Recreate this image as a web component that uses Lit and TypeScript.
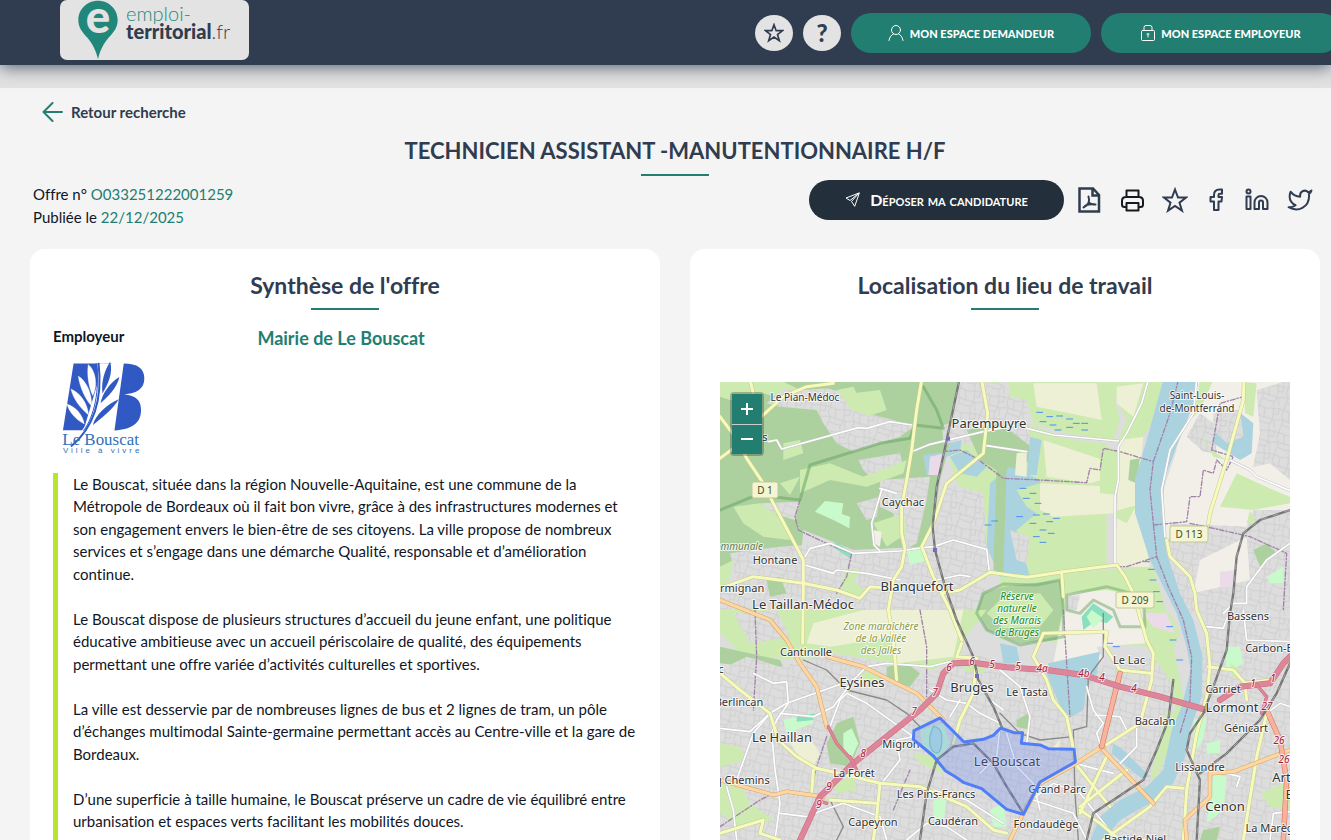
import { LitElement, html, svg, css } from "lit";
import { customElement } from "lit/decorators.js";

type Shape = [string, string];

const FOREST = "#add19e";
const GRASS = "#cdebb0";
const FARM = "#eef0d5";
const WATER = "#aad3df";
const PARK = "#c8facc";
const TOWN = "#dddddd";
const SAND = "#f2efe9";
const MALL = "#ebdbe8";
const PITCH = "#88e0be";

/* Land cover, in thirds of a pixel, painted in order. */
const areas: Shape[] = [
  [FOREST, "0,0 720,0 690,190 660,300 640,440 610,500 400,510 250,450 240,560 60,520 0,600"],
  [GRASS, "0,0 260,0 200,60 130,40 60,70 0,50"],
  [TOWN, "140,70 190,30 300,20 380,40 440,100 520,120 580,140 540,170 400,215 350,190 310,130 290,90 180,80"],
  [FOREST, "180,0 360,6 330,25 240,30"],
  [GRASS, "350,30 400,20 440,100 400,95"],
  [GRASS, "400,40 480,30 500,90 440,110"],
  [TOWN, "415,240 540,220 550,260 450,290 430,270"],
  [TOWN, "410,370 480,350 470,410 440,420"],
  [TOWN, "480,300 630,290 620,360 590,490 550,510 520,400 480,380"],
  [TOWN, "120,370 240,365 225,420 160,400"],
  [GRASS, "40,380 120,370 190,420 210,480 130,470 70,430"],
  [GRASS, "190,190 240,180 250,220 190,240"],
  [GRASS, "240,270 330,250 430,290 560,240 550,280 440,320 330,300 240,340"],
  [GRASS, "180,310 240,290 210,345"],
  [PARK, "285,395 315,363 370,370 365,402 390,410 388,445 340,420"],
  [TOWN, "30,520 180,500 330,490 400,520 550,510 640,495 800,500 810,580 780,620 900,700 0,700 0,630 50,600"],
  [GRASS, "0,560 40,540 30,600 0,620"],
  [GRASS, "380,560 430,575 400,600 440,640 400,650 360,620"],
  [FOREST, "140,600 180,590 200,640 150,650"],
  [PARK, "560,510 610,500 625,540 570,555"],
  [PITCH, "345,485 395,515 390,535 345,505"],
  [GRASS, "460,430 550,400 560,460 500,500"],
  [SAND, "460,450 485,455 480,500 460,490"],
  [GRASS, "720,0 840,0 840,100 1060,180 1160,190 1160,560 1000,580 840,590 800,500 790,390 720,330 690,250"],
  [TOWN, "690,6 770,6 840,10 920,60 930,200 840,210 720,190 670,190 665,110"],
  [GRASS, "865,6 1000,0 1170,0 1200,120 1180,185 1040,160 940,130 920,60 870,50"],
  [FOREST, "600,0 715,0 690,130 650,140"],
  [WATER, "690,190 725,180 720,215 680,230"],
  [WATER, "610,225 680,215 660,280 620,285"],
  [MALL, "630,230 675,220 660,285 625,285"],
  [FOREST, "740,150 840,130 960,220 860,290 780,240"],
  [WATER, "690,230 740,210 800,260 770,290 720,280"],
  [TOWN, "680,310 790,340 800,500 790,560 650,600 640,480"],
  [WATER, "810,310 870,260 960,300 970,340 920,380 950,400 890,450 930,590 840,590 800,500"],
  [GRASS, "890,330 960,310 960,380 920,380"],
  [TOWN, "870,450 930,470 920,550 890,540"],
  [WATER, "930,170 965,180 950,285 920,285"],
  [FOREST, "830,260 860,250 850,580 820,570"],
  [FARM, "940,10 1130,10 1145,120 1050,100 950,80"],
  [FARM, "970,180 1150,240 1145,300 1110,310 980,290"],
  [FARM, "960,310 1185,320 1185,400 1000,410 960,390"],
  [GRASS, "1160,0 1340,0 1290,140 1260,180 1190,190 1220,120"],
  [FARM, "1190,20 1270,10 1240,110 1190,70"],
  [FARM, "1200,180 1270,170 1250,380 1270,460 1290,560 1180,560 1190,430"],
  [FARM, "890,220 920,215 920,290 885,285"],
  [GRASS, "1140,200 1200,210 1190,345 1140,340"],
  [GRASS, "1180,395 1250,375 1220,430 1180,410"],
  [FOREST, "1230,240 1260,235 1250,310 1225,300"],
  [SAND, "1340,0 1710,0 1710,480 1500,520 1340,480 1330,330 1370,210"],
  [GRASS, "1440,0 1480,0 1440,90 1420,110"],
  [TOWN, "1400,170 1440,100 1480,130 1490,220 1450,215"],
  [WATER, "1490,120 1550,90 1600,130 1595,220 1560,240 1480,190"],
  [TOWN, "1480,100 1560,90 1570,170 1520,190 1480,150"],
  [GRASS, "1575,6 1610,10 1600,110 1575,100"],
  [TOWN, "1610,30 1710,0 1710,300 1650,250 1600,260 1620,160"],
  [GRASS, "1550,280 1660,330 1710,350 1710,370 1600,390 1500,380"],
  [GRASS, "1440,150 1480,230 1520,240 1460,200"],
  [TOWN, "1350,430 1580,440 1600,390 1710,390 1710,700 1390,700 1340,560"],
  [SAND, "1440,540 1580,470 1590,600 1420,640"],
  [MALL, "1500,575 1545,570 1540,620 1500,620"],
  [GRASS, "1580,430 1590,390 1610,430"],
  [FOREST, "1600,510 1640,490 1670,520 1620,560"],
  [PARK, "1640,590 1690,560 1690,610 1650,610"],
  [GRASS, "840,590 1300,560 1340,700 1400,1000 1340,1050 1300,800 840,780"],
  [FOREST, "770,690 790,640 850,620 1020,600 1030,680 1010,780 900,790 800,750"],
  [GRASS, "800,700 850,650 960,640 1000,690 960,740 850,745"],
  [SAND, "1040,640 1160,630 1270,650 1275,790 1130,800 1150,840 1000,850"],
  [TOWN, "1040,650 1080,645 1070,690 1040,690"],
  [PITCH, "1085,710 1120,670 1180,710 1160,730 1130,720 1090,750"],
  [PARK, "1100,710 1115,690 1150,715 1120,745"],
  [GRASS, "1260,720 1350,700 1380,760 1350,830 1280,760"],
  [MALL, "1270,700 1340,700 1365,760 1300,740"],
  [GRASS, "0,690 800,690 730,780 720,830 640,870 520,850 380,830 210,840 60,820 0,760"],
  [FOREST, "0,800 180,840 200,880 90,860 0,850"],
  [TOWN, "40,700 170,690 210,770 90,790"],
  [FARM, "430,690 730,690 700,830 530,850 520,770 330,800 260,790 280,730"],
  [TOWN, "0,870 80,830 180,860 340,820 520,850 640,880 720,830 760,820 820,840 900,850 960,1380 0,1380"],
  [TOWN, "880,850 1000,880 1300,830 1350,900 1380,1070 1320,1230 1200,1380 900,1380"],
  [TOWN, "1460,690 1710,690 1710,1380 1140,1380 1360,1220 1420,1040 1440,880"],
  [GRASS, "0,1090 60,1100 80,1140 0,1160"],
  [GRASS, "0,1200 60,1210 90,1270 160,1320 60,1340 0,1300"],
  [FOREST, "320,1090 350,1030 400,1010 420,1090 390,1160 330,1150"],
  [PARK, "370,1060 395,1045 415,1090 395,1135 370,1110"],
  [FARM, "210,1090 260,1060 300,1120 280,1160 230,1120"],
  [PARK, "190,1020 270,1000 280,1030 200,1060"],
  [PITCH, "230,1010 285,1000 280,1020 230,1025"],
  [GRASS, "580,1120 650,1130 670,1180 600,1150"],
  [FOREST, "500,860 560,850 600,880 570,920 500,900"],
  [GRASS, "420,880 470,870 480,910 430,910"],
  [GRASS, "340,1210 400,1190 410,1230 350,1240"],
  [PARK, "640,1260 680,1250 670,1330 640,1310"],
  [PARK, "810,1290 850,1270 860,1340 820,1340"],
  [GRASS, "730,840 800,850 790,880 730,870"],
  [PARK, "600,1050 670,1030 690,1090 660,1140 610,1110"],
  [WATER, "840,790 890,800 900,850 850,850"],
  [WATER, "985,850 1140,815 1130,880 1100,920 1090,990 1055,1010 1030,1000 1000,930 980,880"],
  [FOREST, "890,1020 925,1000 930,1050 890,1040"],
  [GRASS, "1340,990 1380,1000 1350,1100 1310,1190 1290,1200"],
  [FARM, "1000,1100 1020,1080 1015,1120"],
  [WATER, "1180,1090 1210,1110 1250,1150 1290,1190 1265,1195 1220,1160 1175,1120"],
  [PARK, "1420,1020 1460,1010 1450,1080 1420,1120"],
  [PARK, "1515,800 1560,800 1570,850 1520,880"],
  [PARK, "1460,1090 1500,1080 1500,1120 1460,1120"],
  [PARK, "1480,1180 1520,1190 1510,1290 1460,1330"],
  [GRASS, "1530,850 1560,870 1540,900"],
  [GRASS, "1620,1240 1710,1200 1710,1290 1650,1280"],
  [FOREST, "1450,1350 1500,1340 1490,1380 1440,1380"],
];

const river =
  "M1330,0 L1435,0 L1425,60 L1370,200 L1335,290 L1325,400 L1340,520 L1380,640 L1420,720 L1448,830 L1445,950 L1410,1050 L1395,1130 L1360,1210 L1290,1270 L1200,1320 L1150,1380 L1112,1380 L1140,1310 L1200,1260 L1280,1220 L1330,1170 L1355,1050 L1385,980 L1412,870 L1400,800 L1370,700 L1290,540 L1245,400 L1245,300 L1280,180 Z";

/* Roads grouped by their class: casing colour, fill colour, width, paths. */
const roads: { edge: string; fill: string; width: number; paths: string[] }[] = [
  {
    edge: "#c4c4c4",
    fill: "#ffffff",
    width: 5,
    paths: [
      "M145,185 L170,180 L185,207 L415,143 L440,145 L510,125 L575,135",
      "M575,215 L630,193 L790,155 L890,135",
      "M800,197 L920,215",
      "M480,325 L530,340 M485,330 L455,430 L462,495 L480,513",
      "M255,530 L270,505 L330,490 L400,520 L540,513 L610,503 L640,500 L700,480 L800,508 L808,575",
      "M255,555 L340,580 L350,570 L440,580 L540,600",
      "M650,600 L720,585 L750,590",
      "M1285,0 L1265,70 L1220,160 L1195,200 L1195,300 L1185,350 L1185,550",
      "M920,145 L1000,165 L1195,183",
      "M1430,0 L1420,100 L1350,210 L1325,330 L1335,470",
      "M1530,240 L1590,270 L1610,290 L1710,332",
      "M1510,700 L1540,670 L1580,670 L1580,620 L1640,540 L1710,490",
      "M0,1045 L90,1055 L150,1000 L200,970 L370,910",
      "M50,1200 L100,1060 L150,1000",
      "M100,880 L160,910 L200,905 L205,970 L170,1020 L155,1060 L165,1170 L180,1270 L165,1380",
      "M180,1000 L280,1010 L340,980 L400,900 L440,860 L500,850 L630,860 L710,840",
      "M330,1040 L360,960 L380,940 L440,970 L580,1070",
      "M580,1070 L530,1080 L540,1140 L485,1210",
      "M50,1380 L40,1290 L20,1220",
      "M180,1300 L260,1310 L310,1290 L370,1270 L480,1310 L500,1380",
      "M630,930 L680,960 L740,970 L780,1000 L840,1030",
      "M840,1040 L830,1130 L780,1180",
      "M720,960 L690,1010 M770,900 L810,960 L850,990",
      "M840,870 L900,920 L930,1010 L920,1090",
      "M1100,920 L1120,990 L1150,1030 L1130,1060 L1140,1090",
      "M1125,1005 L1200,1010 L1220,1050 L1250,1040 L1250,1100 L1200,1150",
      "M1065,1150 L1180,1180 M940,1260 L1060,1300 L1100,1380",
      "M920,1270 L1000,1210 L1080,1240 L1160,1340",
      "M860,1060 L890,1160 L940,1210 L960,1290",
      "M640,1230 L740,1260 L850,1330",
      "M560,1380 L620,1330 L680,1340 L740,1380",
      "M1460,740 L1510,745 L1530,690",
      "M1570,690 L1580,780 L1710,785",
      "M1520,1180 L1560,1190 L1550,1220",
      "M1640,1000 L1680,970 L1710,980",
      "M1650,1380 L1660,1300 L1710,1295",
    ],
  },
  {
    edge: "#c5cc86",
    fill: "#f7fabf",
    width: 9,
    paths: [
      "M0,110 L45,170 L80,235 L130,310 L160,370 L250,540 L250,610 L248,790",
      "M90,0 L100,40 M60,190 L0,235 M45,180 L130,105 L190,50 L260,20 L340,10",
      "M605,0 L590,90 L575,210 L560,300 L545,380 L545,460 L555,505 L545,560 L520,600 L505,690 L520,780 L530,900",
      "M785,0 L803,100 L790,220 L680,310 L640,430 L605,500 L640,590 L690,690 L725,780",
      "M0,625 L100,590 L250,610 L350,630 L420,655 L450,620 L520,625",
      "M665,640 L720,630 L810,577 L920,592 L1030,575 L1190,555 L1215,590 L1240,640 L1280,780 L1300,820 L1295,900 L1260,1030 L1150,1100",
      "M1572,0 L1570,60 L1520,240 L1470,400 L1465,430",
      "M1340,480 L1350,530 L1410,590 L1425,640 L1430,690 L1460,760 L1470,860 L1460,950 L1430,1060 L1400,1230 L1390,1380",
      "M1025,575 L1030,650",
      "M0,880 L60,930 L150,1000 L175,1080 L230,1130 L290,1165 L400,1190 L480,1210 L600,1220 L740,1280 L820,1350 L860,1360",
      "M725,790 L710,830 L770,835 L760,940 L720,1020 L700,1090",
      "M970,760 L940,830 L980,900 L1000,960 L1040,1010 L1055,1080 L1065,1140",
      "M970,760 L1160,755 L1155,800 L1200,870 L1290,880",
      "M480,1210 L470,1310 L460,1380 M275,1240 L280,1170 M330,1260 L470,1270",
      "M0,1360 L130,1320 L120,1360 L180,1380",
      "M1065,1150 L1170,1280 M1160,1130 L1080,1300 M1220,1170 L1080,1280",
      "M1465,860 L1540,870 L1575,910 L1580,960",
      "M1575,910 L1650,900 L1690,860 L1710,830",
      "M1640,1000 L1610,1130 L1570,1380",
      "M1150,1380 L1290,1280 L1340,1220 L1390,1225",
      "M1080,1290 L1140,1330 L1200,1380",
    ],
  },
  {
    edge: "#d9a45f",
    fill: "#fcd6a4",
    width: 10,
    paths: [
      "M75,690 L150,720 L200,780 L240,850 L290,920 L320,1040",
      "M0,660 L75,690",
      "M320,830 L430,860 L590,940 L670,1020",
      "M0,1200 L160,1245 L200,1235 L310,1250",
      "M1300,1270 L1140,1100",
      "M1060,1155 L1150,1098 M960,1210 L1060,1155",
      "M870,1380 L910,1300 L960,1210",
      "M1400,1380 L1395,1320 L1470,1250 L1470,1180 L1540,1175 L1710,1110",
    ],
  },
  {
    edge: "#cf6d58",
    fill: "#f9b29c",
    width: 13,
    paths: ["M1200,880 L1170,1000 L1145,1100", "M1640,990 L1680,1080 L1700,1200 L1690,1380"],
  },
  {
    edge: "#d06a84",
    fill: "#dd8599",
    width: 15,
    paths: [
      "M240,1380 L300,1250 L400,1150 L500,1070 L600,990 L650,940 L670,880 L700,850 L760,848 L860,862 L980,870 L1090,885 L1200,920 L1320,950 L1460,990",
      "M1500,960 L1560,920 L1650,910 L1690,850 L1710,830",
    ],
  },
  { edge: "#d06a84", fill: "#dd8599", width: 7, paths: ["M325,1040 L350,1090 L400,1145", "M1610,915 L1640,950 L1625,1000 M390,1130 L410,1170 M330,1230 L290,1260 L320,1270"] },
];

const rails = [
  "M718,0 L680,180 L650,320 L638,440 L645,510 L675,620 L710,720 L760,830 L775,900 L820,980 L845,1040",
  "M1710,390 L1620,420 L1570,460 L1550,530 L1540,640 L1530,700 L1520,810 L1480,920 L1450,1000 L1410,1060 L1400,1110 L1440,1200 L1430,1380",
  "M600,1380 L620,1240 L650,1140 L700,1100 L760,1090 L820,1150 L860,1220 L910,1300",
  "M1710,850 L1670,940 L1620,1020 L1520,1120 L1440,1180",
  "M1100,1380 L1120,1300 L1180,1260 L1270,1200 L1310,1110 L1345,1020 L1360,900",
];

const tracks = [
  "M1150,700 L1150,830 L1105,890 L1100,1040 L1060,1050 L1065,1240 L1075,1380",
  "M840,1000 L900,1060 L960,1080 L1060,1070",
  "M250,840 L320,870 L380,930 L500,960 L560,1000 L600,1040",
  "M330,1260 L370,1340 L350,1380",
];

const borders = [
  "M240,360 L225,410 L235,450 L330,495 L395,520 L380,590 L350,640",
  "M670,215 L720,210 L770,235 L850,295 L960,300 L1100,308 L1110,265 L1140,270 L1150,205 L1200,215 L1300,245",
  "M1375,0 L1350,100 L1300,245 L1290,330 L1300,430 L1310,530 L1345,620 L1390,720 L1415,830 L1410,960 L1380,1060",
  "M1300,435 L1400,425 L1410,350 L1440,350 L1450,270 L1480,280 L1490,240 L1520,270 L1540,230 L1475,210 L1500,70 L1570,50",
  "M1410,430 L1480,445 L1590,470 L1700,520 L1690,690",
  "M1190,560 L1220,560 L1310,530",
  "M1030,690 L1040,850 L1050,1010",
  "M0,1340 L120,1260 L160,1240",
  "M320,1070 L290,1160 L270,1240 M520,1290 L570,1170",
  "M105,690 L110,830 L100,990",
  "M600,690 L620,800 L620,950",
];

const marshes: [number, number][] = [
  [950, 97], [980, 110], [1010, 108], [960, 125], [990, 135], [1040, 117], [1060, 130], [1085, 130], [1005, 150], [1040, 142], [1085, 150],
  [900, 325], [930, 340], [910, 355], [945, 370], [890, 410], [940, 405], [970, 402], [930, 430], [980, 425], [1000, 415], [960, 450], [985, 460], [940, 470], [960, 487],
  [795, 435], [815, 423], [1270, 545], [1285, 568], [1290, 600], [1300, 635], [1310, 665], [1340, 740], [1350, 780], [1370, 840], [1160, 790], [1180, 800],
];

const commune =
  "M582,1052 L660,1014 L732,1086 L790,1078 L820,1066 L842,1044 L882,1058 L908,1058 L904,1090 L960,1095 L985,1106 L1062,1108 L1066,1146 L960,1206 L910,1303 L860,1288 L785,1226 L732,1208 L706,1190 L676,1172 L640,1128 L580,1078 Z";

type Label = { t: string; x: number; y: number; c?: string };

const labels: Label[] = [
  { t: "Le Pian-Médoc", x: 85, y: 19, c: "small" },
  { t: "s", x: 45, y: 59 },
  { t: "Saint-Louis-", x: 477, y: 17, c: "small" },
  { t: "de-Montferrand", x: 477, y: 30, c: "small" },
  { t: "Parempuyre", x: 269, y: 46, c: "town" },
  { t: "Caychac", x: 183, y: 124 },
  { t: "Hontane", x: 55, y: 182 },
  { t: "Germignan", x: 15, y: 210 },
  { t: "Blanquefort", x: 197, y: 209, c: "town" },
  { t: "Le Taillan-Médoc", x: 83, y: 227, c: "town" },
  { t: "Communale", x: 16, y: 168, c: "wood" },
  { t: "Réserve", x: 297, y: 218, c: "reserve" },
  { t: "naturelle", x: 297, y: 230, c: "reserve" },
  { t: "des Marais", x: 297, y: 242, c: "reserve" },
  { t: "de Bruges", x: 297, y: 254, c: "reserve" },
  { t: "Zone maraîchère", x: 161, y: 248, c: "zone" },
  { t: "de la Vallée", x: 161, y: 260, c: "zone" },
  { t: "des Jalles", x: 161, y: 272, c: "zone" },
  { t: "Cantinolle", x: 86, y: 274 },
  { t: "c", x: 1, y: 291 },
  { t: "Eysines", x: 142, y: 305, c: "town" },
  { t: "Berlincan", x: 19, y: 324 },
  { t: "Bruges", x: 252, y: 310, c: "town" },
  { t: "Le Tasta", x: 307, y: 314 },
  { t: "Le Haillan", x: 62, y: 360, c: "town" },
  { t: "Migron", x: 181, y: 366 },
  { t: "Le Bouscat", x: 287, y: 384, c: "town" },
  { t: "La Forêt", x: 134, y: 395 },
  { t: "Cinq Chemins", x: 14, y: 402 },
  { t: "Les Pins-Francs", x: 216, y: 416 },
  { t: "Capeyron", x: 153, y: 444 },
  { t: "Caudéran", x: 233, y: 443 },
  { t: "Grand Parc", x: 337, y: 411 },
  { t: "Fondaudège", x: 326, y: 446 },
  { t: "Bacalan", x: 435, y: 343 },
  { t: "Le Lac", x: 409, y: 282 },
  { t: "Bassens", x: 528, y: 238 },
  { t: "Carbon-Blanc", x: 560, y: 270 },
  { t: "Carriet", x: 503, y: 311 },
  { t: "Lormont", x: 512, y: 330, c: "town" },
  { t: "Génicart", x: 526, y: 350 },
  { t: "Lissandre", x: 480, y: 389 },
  { t: "Cenon", x: 505, y: 429, c: "town" },
  { t: "Artigues-", x: 580, y: 400, c: "town" },
  { t: "E", x: 569, y: 417, c: "town" },
  { t: "La Marègue", x: 556, y: 450 },
  { t: "Bastide-Niel", x: 415, y: 461 },
];

const exits: Label[] = [
  { t: "7", x: 194, y: 333 }, { t: "7", x: 215, y: 314 }, { t: "6", x: 229, y: 289 }, { t: "6", x: 252, y: 283 },
  { t: "5", x: 272, y: 286 }, { t: "5", x: 298, y: 288 }, { t: "4a", x: 322, y: 290 }, { t: "4b", x: 364, y: 295 },
  { t: "4", x: 382, y: 299 }, { t: "4", x: 414, y: 310 }, { t: "8", x: 143, y: 375 }, { t: "9", x: 109, y: 408 },
  { t: "9", x: 99, y: 426 }, { t: "1", x: 533, y: 305 }, { t: "1", x: 553, y: 300 }, { t: "27", x: 547, y: 328 },
  { t: "26", x: 559, y: 362 }, { t: "26", x: 564, y: 381 },
];

const shields: (Label & { w: number })[] = [
  { t: "D 1", x: 45, y: 108, w: 26 },
  { t: "D 113", x: 469, y: 152, w: 38 },
  { t: "D 209", x: 415, y: 218, w: 38 },
];

@customElement("area-map")
class AreaMap extends LitElement {
  static styles = css`
    :host {
      display: block;
      position: relative;
      height: 500px;
      overflow: hidden;
      background: #dddddd;
    }
    .canvas {
      display: block;
      width: 100%;
      height: 100%;
    }
    text {
      font-family: "Noto Sans", sans-serif;
      font-size: 11px;
      text-anchor: middle;
      fill: #333333;
      stroke: #ffffff;
      stroke-opacity: 0.75;
      stroke-width: 2px;
      stroke-linejoin: round;
      paint-order: stroke;
    }
    .small {
      font-size: 10px;
    }
    .town {
      font-size: 13px;
    }
    .reserve {
      font-size: 10px;
      font-style: italic;
      fill: #1e8a1e;
    }
    .zone {
      font-size: 10px;
      font-style: italic;
      fill: #8a9a48;
    }
    .wood {
      font-size: 10px;
      font-style: italic;
      fill: #5e7a50;
    }
    .exit {
      font-size: 10px;
      font-style: italic;
      fill: #a0203c;
    }
    .ref {
      font-size: 10px;
      fill: #444c20;
      stroke: none;
    }
    .zoom {
      position: absolute;
      top: 10px;
      left: 10px;
      display: grid;
      border: 2px solid rgba(0, 0, 0, 0.25);
      border-radius: 4px;
      background-clip: padding-box;
    }
    .zoom button {
      display: grid;
      place-items: center;
      width: 30px;
      height: 30px;
      padding: 0;
      border: 0;
      background: #227e71;
      cursor: pointer;
    }
    .zoom button + button {
      border-top: 1px solid #cccccc;
    }
  `;

  render() {
    return html`
      <svg class="canvas" viewBox="0 0 570 500" preserveAspectRatio="xMidYMin slice" role="img" aria-label="Carte du lieu de travail">
        <defs>
          <pattern id="streets" width="74" height="68" patternUnits="userSpaceOnUse" patternTransform="rotate(12)">
            <path
              d="M0,12 L30,8 L74,14 M0,40 L22,44 L46,38 L74,42 M14,0 L18,40 L10,68 M46,0 L42,26 L50,38 L46,68 M62,14 L66,42 M22,44 L28,68 M30,8 L32,24 L18,26 M50,54 L74,58 M0,58 L13,56"
              fill="none"
              stroke="#c8c8c8"
              stroke-width="2"
            />
          </pattern>
        </defs>
        <g transform="translate(0 -2) scale(0.33333)" stroke-linejoin="round" stroke-linecap="round">
          <rect width="1710" height="1510" fill="#dddddd" />
          ${areas.map(
            ([fill, points]) => svg`<polygon points=${points} fill=${fill} />
              ${fill === TOWN ? svg`<polygon points=${points} fill="url(#streets)" />` : null}`
          )}
          <path d=${river} fill="#aad3df" />
          <path d="M640,1040 Q670,1040 665,1090 Q660,1135 635,1110 Q620,1080 640,1040 Z" fill="#b4e6e0" stroke="#8ad0c0" stroke-width="4" />
          <path
            d="M610,20 L650,90 L670,145 L585,135 L570,175 L480,190 L270,255 L240,360 L110,345 L0,390"
            fill="none" stroke="#6ea86a" stroke-opacity="0.6" stroke-width="9"
          />
          <path
            d="M770,700 L790,640 L850,612 L950,615 L1020,600 L1030,680 L1030,770 L900,795 L800,750 Z M1040,645 L1160,620 L1270,650 L1275,740 L1200,740 L1180,690 L1120,660 L1080,700 L1040,690 Z"
            fill="none" stroke="#6ea86a" stroke-opacity="0.5" stroke-width="9"
          />
          ${marshes.map(([x, y]) => svg`<path d=${`M${x},${y} h18`} stroke="#4a90f0" stroke-width="3" />`)}
          ${borders.map((d) => svg`<path d=${d} fill="none" stroke="#a083a8" stroke-width="4" stroke-dasharray="14 6 4 6" />`)}
          ${tracks.map((d) => svg`<path d=${d} fill="none" stroke="#8a8a8a" stroke-width="4" />`)}
          ${roads.map(
            (r) => svg`
              ${r.paths.map((d) => svg`<path d=${d} fill="none" stroke=${r.edge} stroke-width=${r.width + 3} />`)}
              ${r.paths.map((d) => svg`<path d=${d} fill="none" stroke=${r.fill} stroke-width=${r.width} />`)}`
          )}
          ${rails.map(
            (d) => svg`<path d=${d} fill="none" stroke="#777777" stroke-width="7" />
              <path d=${d} fill="none" stroke="#bbbbbb" stroke-width="2" stroke-dasharray="18 18" stroke-linecap="butt" />`
          )}
          <path d="M678,170 h12 v12 h-12 Z M639,504 h12 v12 h-12 Z M765,882 h12 v12 h-12 Z" fill="#7070b8" />
        </g>
        ${labels.map((l) => svg`<text class=${l.c ?? "place"} x=${l.x} y=${l.y}>${l.t}</text>`)}
        ${exits.map((l) => svg`<text class="exit" x=${l.x} y=${l.y}>${l.t}</text>`)}
        ${shields.map(
          (s) => svg`<rect x=${s.x - s.w / 2} y=${s.y - 8} width=${s.w} height="16" rx="2" fill="#f4f5d3" stroke="#c3c795" />
            <text class="ref" x=${s.x} y=${s.y + 4}>${s.t}</text>`
        )}
        <path
          transform="translate(0 -2) scale(0.33333)"
          d=${commune}
          fill="#6080f0" fill-opacity="0.27" stroke="#4f7ef8" stroke-width="9" stroke-linejoin="round"
        />
      </svg>
      <div class="zoom">
        <button type="button" aria-label="Zoomer">
          <svg width="14" height="14" viewBox="0 0 14 14"><path d="M7 1v12M1 7h12" stroke="#fff" stroke-width="2" /></svg>
        </button>
        <button type="button" aria-label="Dézoomer">
          <svg width="14" height="14" viewBox="0 0 14 14"><path d="M1 7h12" stroke="#fff" stroke-width="2" /></svg>
        </button>
      </div>
    `;
  }
}

@customElement("app-root")
class AppRoot extends LitElement {
  static styles = css`
    :host {
      display: block;
      min-height: 100vh;
      overflow-x: clip;
      background: #f4f4f4;
      color: #0f1626;
      font-family: Lato, "Open Sans", sans-serif;
      font-size: 15px;
      font-variant-ligatures: none;
      line-height: 1.5;
    }
    * {
      box-sizing: border-box;
    }
    a {
      color: inherit;
      text-decoration: none;
    }
    svg {
      display: block;
      flex: none;
    }
    .stroke {
      fill: none;
      stroke: currentColor;
      stroke-width: 2;
      stroke-linecap: round;
      stroke-linejoin: round;
    }
    .thin {
      stroke-width: 1;
    }
    .topbar {
      position: relative;
      display: flex;
      justify-content: space-between;
      height: 65px;
      padding-left: 60px;
      background: #303c4f;
      box-shadow: 0 2px 16px rgba(48, 60, 79, 0.8);
    }
    .brand {
      display: flex;
      gap: 8px;
      width: 189px;
      height: 60px;
      padding-left: 18px;
      border-radius: 7px;
      background: #e3e3e3;
    }
    .pin-letter {
      font: 900 38px Lato, sans-serif;
      fill: #e3e3e3;
      text-anchor: middle;
    }
    .brand-name {
      display: grid;
      align-content: start;
      padding-top: 4px;
      color: #303c4f;
      font-size: 20px;
      font-weight: 300;
      line-height: 18px;
    }
    .brand-name b {
      font-weight: 900;
    }
    .brand-top {
      color: #268a7c;
    }
    .tools {
      display: flex;
      flex: none;
      align-items: center;
      gap: 10px;
      margin-right: -10px;
    }
    .round {
      display: grid;
      place-items: center;
      width: 38px;
      height: 36px;
      border: 0;
      border-radius: 50%;
      padding: 0;
      background: #e3e3e3;
      color: #303c4f;
      font: 900 24px Lato, sans-serif;
      cursor: pointer;
    }
    .space {
      display: flex;
      align-items: center;
      justify-content: center;
      gap: 6px;
      width: 240px;
      height: 40px;
      border-radius: 20px;
      background: #227e71;
      color: #ffffff;
      font-size: 11px;
      font-weight: 900;
    }
    .space span {
      padding-top: 4px;
    }
    .band {
      height: 23px;
      background: #e2e2e2;
    }
    .page {
      padding: 13px 11px 30px 30px;
    }
    .back {
      display: inline-flex;
      align-items: center;
      gap: 8px;
      margin-left: 12px;
      color: #303c4f;
      font-weight: 700;
    }
    .back svg {
      color: #227e71;
    }
    h1,
    h2 {
      display: grid;
      justify-items: center;
      gap: 7px;
      margin: 0;
      color: #303c4f;
      font-size: 22px;
      font-weight: 700;
      line-height: 32px;
      text-align: center;
    }
    h2 {
      font-size: 23px;
    }
    h1::after,
    h2::after {
      content: "";
      width: 68px;
      height: 2px;
      background: #227e71;
    }
    h1 {
      margin-top: 7px;
    }
    .meta {
      display: flex;
      justify-content: space-between;
      align-items: start;
      margin: 4px 0 20px;
      padding: 0 7px 0 3px;
    }
    .meta p {
      margin: 0;
      padding-top: 3px;
      line-height: 23px;
    }
    .green {
      color: #227e71;
    }
    .actions {
      display: flex;
      align-items: center;
      color: #303c4f;
    }
    .apply {
      display: flex;
      align-items: center;
      justify-content: center;
      gap: 10px;
      width: 255px;
      height: 40px;
      margin-right: 12px;
      border: 0;
      border-radius: 20px;
      background: #232f3b;
      color: #ffffff;
      font: 700 16px Lato, sans-serif;
      font-variant: small-caps;
      cursor: pointer;
    }
    .icons {
      display: flex;
      align-items: center;
      gap: 17px;
    }
    .cards {
      display: grid;
      grid-template-columns: 1fr 1fr;
      gap: 30px;
      align-items: start;
    }
    .card {
      padding: 20px 23px 30px;
      border-radius: 15px;
      background: #ffffff;
    }
    .employer {
      display: grid;
      grid-template-columns: 7fr 13fr;
      margin: 14px 0 0;
      color: #0f1626;
    }
    .employer dt {
      font-weight: 700;
      line-height: 24px;
    }
    .employer dd {
      margin: 0;
      font-size: 18px;
      font-weight: 700;
      line-height: 28px;
    }
    .crest {
      margin: 8px 0 18px;
      overflow: visible;
    }
    .crest-name {
      font: 51px "Liberation Serif", serif;
      fill: #3470b8;
    }
    .crest-motto {
      font: 24px "Liberation Sans", sans-serif;
      letter-spacing: 9px;
      fill: #3470b8;
    }
    .about {
      display: grid;
      gap: 1.5em;
      padding: 0 0 30px 15px;
      border-left: 5px solid #b8e62e;
    }
    .about p {
      margin: 0;
    }
    .place {
      padding: 20px 30px 30px;
    }
    .place area-map {
      margin-top: 72px;
    }
  `;

  render() {
    return html`
      <header class="topbar">
        <a class="brand" href="#" aria-label="emploi-territorial.fr">
          <svg width="40" height="60" viewBox="0 0 120 180">
            <path d="M60 2 C93 2 119 28 119 60 C119 84 107 96 93 112 C76 132 66 152 60 178 C54 152 44 132 27 112 C13 96 1 84 1 60 C1 28 27 2 60 2 Z" fill="#22877b" />
            <text class="pin-letter" transform="translate(60 99) scale(3.6)">e</text>
          </svg>
          <span class="brand-name">
            <span class="brand-top">emploi-</span>
            <span><b>territorial</b>.fr</span>
          </span>
        </a>
        <div class="tools">
          <button class="round" type="button" aria-label="Favoris">
            <svg class="stroke" width="20" height="20" viewBox="0 0 24 24"><path d="M12 2l2.600 7.200h7.600l-6 4.700 2.200 7.400-6.400-4.400-6.400 4.400 2.200-7.400-6-4.700h7.600z" stroke-linejoin="miter" /></svg>
          </button>
          <button class="round" type="button" aria-label="Aide">?</button>
          <a class="space" href="#">
            <svg class="stroke thin" width="16" height="16" viewBox="0 0 16 16"><circle cx="8" cy="5" r="4.500" /><path d="M1 15.500c.5-3.600 2.500-5.800 4.500-6.600M15 15.500c-.5-3.600-2.500-5.800-4.500-6.600" /></svg>
            <span>MON ESPACE DEMANDEUR</span>
          </a>
          <a class="space" href="#">
            <svg class="stroke thin" width="14" height="16" viewBox="1 0 14 16"><rect x="1.500" y="5.500" width="13" height="10" rx="1" /><path d="M4 5.500V2.500q0-2 2-2h4q2 0 2 2v3M7 9h2M8 9v3" /></svg>
            <span>MON ESPACE EMPLOYEUR</span>
          </a>
        </div>
      </header>
      <div class="band"></div>
      <main class="page">
        <a class="back" href="#">
          <svg class="stroke" width="21" height="20" viewBox="0 0 21 20"><path d="M20 10H1.500M10.500 1L1.500 10l9 9" /></svg>
          Retour recherche
        </a>
        <h1>TECHNICIEN ASSISTANT -MANUTENTIONNAIRE H/F</h1>
        <div class="meta">
          <p>
            Offre n° <span class="green">O033251222001259</span><br />
            Publiée le <span class="green">22/12/2025</span>
          </p>
          <div class="actions">
            <button class="apply" type="button">
              <svg class="stroke thin" width="15" height="15" viewBox="0 0 15 15"><path d="M14 1L1 6l4 2.500L14 1 6.500 9.500 9.500 14z" /></svg>
              Déposer ma candidature
            </button>
            <div class="icons">
              <a href="#" aria-label="PDF">
                <svg class="stroke" width="26" height="26" viewBox="0 0 26 26"><path d="M3.500 1.500H17l6 6.500v16.500H3.500zM16.500 2v6.500H23" stroke-width="2.500" stroke-linejoin="miter" /><path d="M12.500 9.500c1 3 1 4 0 6.500-1 2-3.500 3.500-5 4.500M12.500 15.500c2 2 4 2 7 2M8 20c2-2.500 5-3 10-2.500" stroke-width="2" /></svg>
              </a>
              <a href="#" aria-label="Imprimer">
                <svg class="stroke" width="26" height="26" viewBox="0 0 26 26" color="#15181f"><path d="M7.500 10V3.500h12V10M7 20H5.500Q3 20 3 17.500V14q0-4 4-4h13q4 0 4 4v3.500q0 2.500-2.500 2.500H20M7.500 16h12v7.500h-12z" /></svg>
              </a>
              <a href="#" aria-label="Favori">
                <svg class="stroke" width="26" height="26" viewBox="0 0 26 26"><path d="M13 2.500l3 8h8l-6.500 5.200 2.500 8-7-4.700-7 4.700 2.500-8L2 10.500h8z" stroke-linejoin="miter" /></svg>
              </a>
              <a href="#" aria-label="Facebook">
                <svg class="stroke" width="22" height="26" viewBox="0 0 22 26"><path d="M17 2.500h-2.500Q9 2.500 9 8v2H5.500v4.500H9V23h4.500v-8.500h3l.5-4.500h-3.500V8q0-1.200 1.500-1.200h2z" /></svg>
              </a>
              <a href="#" aria-label="LinkedIn">
                <svg class="stroke" width="26" height="26" viewBox="0 0 26 26"><circle cx="4.500" cy="4.500" r="2" /><path d="M2.500 9.500h4V22h-4zM10.500 22v-6.500a6.500 6.500 0 0 1 13 0V22H19v-6.500a2 2 0 0 0-4 0V22z" /></svg>
              </a>
              <a href="#" aria-label="Twitter">
                <svg class="stroke" width="26" height="26" viewBox="0 0 26 26"><path d="M24.500 3.500a11 11 0 0 1-3.400 1.700c-3-3.200-8-1-8 3.300v1.200c-4 0-7-1.700-9.500-5 0 0-4.200 9.500 5 13.500a11 11 0 0 1-7 2c9.500 5.500 20.500 0 20.500-11.500l-.2-1.500c1.300-1 2.200-2.300 2.600-3.700z" /></svg>
              </a>
            </div>
          </div>
        </div>
        <div class="cards">
          <section class="card">
            <h2>Synthèse de l'offre</h2>
            <dl class="employer">
              <dt>Employeur</dt>
              <dd class="green">Mairie de Le Bouscat</dd>
            </dl>
            <svg class="crest" width="93" height="95" viewBox="98 150 280 285" role="img" aria-label="Le Bouscat, Ville à vivre">
              <path d="M160 160H275L250 260L200 361H128Z" fill="#3159c4" />
              <path d="M250 160H310L283 361H190Z" fill="#fff" />
              <g fill="#fff" stroke="#fff">
                <path d="M204 163C226 180 234 225 218 257C204 230 200 190 204 163Z" />
                <path d="M174 198C198 212 216 250 214 288C196 270 178 230 174 198Z" />
                <path d="M152 237C180 248 202 280 205 315C180 295 158 265 152 237Z" />
                <path d="M140 282C166 290 188 315 192 342C165 328 146 305 140 282Z" />
                <path d="M232 160C240 240 222 320 185 362L215 362L252 260V160Z" />
              </g>
              <g fill="#3159c4">
                <path d="M270 155C280 190 262 225 247 250C242 215 254 180 270 155Z" />
                <path d="M298 201C292 232 262 262 241 280C246 250 272 215 298 201Z" />
                <path d="M296 268C280 296 245 325 218 345C226 315 262 282 296 268Z" />
                <path d="M311 160C352 160 373 175 373 204C373 238 350 250 312 253C348 256 363 270 363 300C363 340 335 358 283 362Z" />
              </g>
              <path d="M235 158C246 250 230 345 152 410" fill="none" stroke="#3159c4" stroke-width="6" />
              <path d="M228 160C240 240 222 320 190 362" fill="none" stroke="#3159c4" stroke-width="3" />
              <text class="crest-name" x="126" y="404">Le Bouscat</text>
              <text class="crest-motto" x="128" y="428">Ville à vivre</text>
            </svg>
            <div class="about">
              <p>Le Bouscat, située dans la région Nouvelle-Aquitaine, est une commune de la Métropole de Bordeaux où il fait bon vivre, grâce à des infrastructures modernes et son engagement envers le bien-être de ses citoyens. La ville propose de nombreux services et s’engage dans une démarche Qualité, responsable et d’amélioration continue.</p>
              <p>Le Bouscat dispose de plusieurs structures d’accueil du jeune enfant, une politique éducative ambitieuse avec un accueil périscolaire de qualité, des équipements permettant une offre variée d’activités culturelles et sportives.</p>
              <p>La ville est desservie par de nombreuses lignes de bus et 2 lignes de tram, un pôle d’échanges multimodal Sainte-germaine permettant accès au Centre-ville et la gare de Bordeaux.</p>
              <p>D’une superficie à taille humaine, le Bouscat préserve un cadre de vie équilibré entre urbanisation et espaces verts facilitant les mobilités douces.</p>
            </div>
          </section>
          <section class="card place">
            <h2>Localisation du lieu de travail</h2>
            <area-map></area-map>
          </section>
        </div>
      </main>
    `;
  }
}
